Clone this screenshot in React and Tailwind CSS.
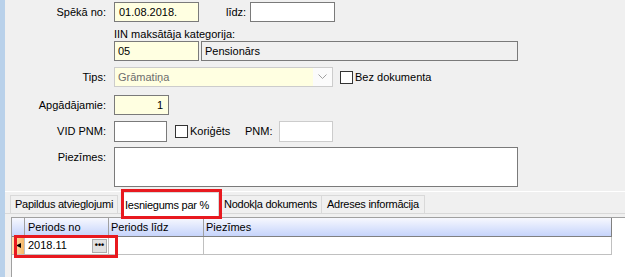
import React from "react";

function Label({ children, className = "" }) {
  return (
    <div className={`w-[101px] shrink-0 pr-0 text-right ${className}`}>{children}</div>
  );
}

function Check({ label, className = "" }) {
  return (
    <div className={`flex items-center ${className}`}>
      <div className="w-[13px] h-[13px] border border-[#333333] bg-white" />
      <span className="ml-[2px]">{label}</span>
    </div>
  );
}

export default function App() {
  return (
    <div className="w-[625px] h-[277px] overflow-hidden flex bg-[#f0f0f0] text-[11px] leading-[13px] text-black font-['Liberation_Sans',Arial,sans-serif]">
      {/* left strip */}
      <div className="w-[5px] shrink-0 bg-[#b9d1ea]" />

      <div className="flex-1 flex flex-col">
        {/* Spēkā no / līdz */}
        <div className="flex items-center h-[20px] mt-[2px]">
          <Label>Spēkā no:</Label>
          <div className="ml-[8px] w-[85px] h-[20px] border border-[#7a7a7a] bg-[#ffffe1] flex items-center pl-[4px]">
            01.08.2018.
          </div>
          <span className="ml-[27px]">līdz:</span>
          <div className="ml-[4px] w-[85px] h-[20px] border border-[#7a7a7a] bg-white" />
        </div>

        {/* IIN */}
        <div className="ml-[109px] mt-[6px] h-[13px]">IIN maksātāja kategorija:</div>
        <div className="flex h-[20px] ml-[109px]">
          <div className="w-[85px] h-[20px] border border-[#7a7a7a] bg-[#ffffe1] flex items-center pl-[3px]">05</div>
          <div className="ml-[2px] w-[317px] h-[20px] border border-[#7a7a7a] bg-[#f0f0f0] flex items-center pl-[3px]">
            Pensionārs
          </div>
        </div>

        {/* Tips */}
        <div className="flex items-center h-[20px] mt-[6px]">
          <Label>Tips:</Label>
          <div className="ml-[8px] w-[219px] h-[20px] border border-[#cccccc] bg-[#fbfbfb] flex">
            <div className="w-[198px] bg-[#ffffe1] flex items-center pl-[3px] text-[#6d6d6d]">Grāmatiņa</div>
            <div className="flex-1 flex items-center justify-center">
              <svg width="9" height="6" viewBox="0 0 9 6">
                <path d="M0.5 0.5 L4.5 4.5 L8.5 0.5" fill="none" stroke="#a0a0a0" strokeWidth="1" />
              </svg>
            </div>
          </div>
          <Check label="Bez dokumenta" className="ml-[7px]" />
        </div>

        {/* Apgādājamie */}
        <div className="flex items-center h-[20px] mt-[8px]">
          <Label>Apgādājamie:</Label>
          <div className="ml-[8px] w-[55px] h-[20px] border border-[#7a7a7a] bg-[#ffffe1] flex items-center justify-end pr-[5px]">
            1
          </div>
        </div>

        {/* VID PNM */}
        <div className="flex items-center h-[21px] mt-[6px]">
          <Label>VID PNM:</Label>
          <div className="ml-[8px] w-[53px] h-[21px] border border-[#7a7a7a] bg-white" />
          <Check label="Koriģēts" className="ml-[8px] w-[70px]" />
          <span className="w-[34px]">PNM:</span>
          <div className="w-[54px] h-[21px] border border-[#cccccc] bg-white" />
        </div>

        {/* Piezīmes */}
        <div className="flex h-[40px] mt-[5px]">
          <Label className="pt-[4px]">Piezīmes:</Label>
          <div className="ml-[8px] w-[404px] h-[40px] border border-[#7a7a7a] bg-white" />
        </div>

        {/* tabs */}
        <div className="mt-[4px] h-[26px] border-t border-white flex items-end pl-[5px] relative tracking-[-0.25px]">
          <div className="absolute left-0 right-0 bottom-[3px] h-px bg-[#d9d9d9]" />
          <div className="relative h-[19px] w-[108px] mb-[3px] pl-[4px] border border-[#d9d9d9] flex items-center whitespace-nowrap">Papildus atvieglojumi</div>
          <div className="relative h-[25px] ml-[3px] w-[98px] pl-[3px] bg-white border border-[#d9d9d9] border-b-0 pt-[6px] whitespace-nowrap">
            Iesniegums par %
          </div>
          <div className="relative h-[19px] w-[101px] mb-[3px] ml-[2px] pl-[2px] border border-[#d9d9d9] flex items-center whitespace-nowrap">Nodokļa dokuments</div>
          <div className="relative h-[19px] w-[103px] mb-[3px] pl-[5px] border border-[#d9d9d9] border-l-0 flex items-center whitespace-nowrap">Adreses informācija</div>
        </div>

        {/* grid */}
        <div className="flex-1 ml-[6px] bg-white border-t border-l border-[#a0a0a0]">
          <div className="w-[600px]">
            <div className="flex h-[19px] bg-gradient-to-b from-[#f7f8fe] to-[#c6d4fb] border-b border-r border-[#808080]">
              <div className="w-[13px] border-r border-[#a0a0a0]" />
              <div className="w-[84px] border-r border-[#a0a0a0] pl-[3px] flex items-center">Periods no</div>
              <div className="w-[95px] border-r border-[#a0a0a0] pl-[2px] flex items-center">Periods līdz</div>
              <div className="flex-1 pl-[2px] flex items-center">Piezīmes</div>
            </div>
            <div className="flex h-[18px] border-b border-r border-[#c0c0c0]">
              <div className="w-[13px] bg-gradient-to-r from-[#fde6b8] to-[#f6b666] border-r border-[#c0c0c0] flex items-center justify-center">
                <svg width="5" height="5" viewBox="0 0 5 5">
                  <path d="M0 2.5 L5 0 L5 5 Z" fill="#000" />
                </svg>
              </div>
              <div className="w-[84px] border-r border-[#c0c0c0] pl-[3px] flex items-center justify-between pr-[1px]">
                <span>2018.11</span>
                <div className="w-[15px] h-[14px] bg-[#e1e1e1] border border-[#adadad] flex items-center justify-center text-[9px] font-bold leading-none">
                  •••
                </div>
              </div>
              <div className="w-[95px] border-r border-[#c0c0c0]" />
              <div className="flex-1" />
            </div>
          </div>
        </div>
      </div>

      {/* red annotation boxes */}
      <div className="absolute left-[121px] top-[189px] w-[101px] h-[30px] border-[3px] border-[#e8191f]" />
      <div className="absolute left-[14px] top-[235px] w-[104px] h-[23px] border-[3px] border-[#e8191f]" />
    </div>
  );
}
